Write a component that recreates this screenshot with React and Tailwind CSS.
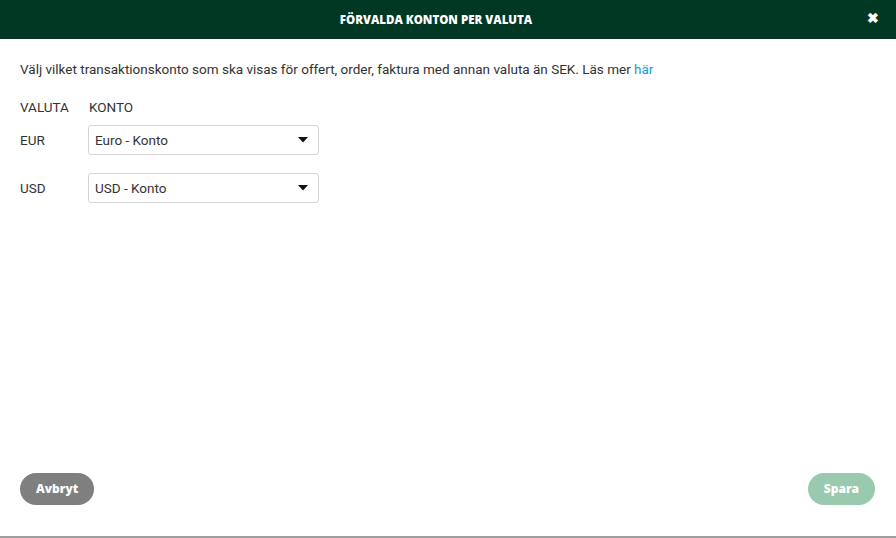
import { useState } from 'react';

const ROWS = [
  { currency: 'EUR', account: 'Euro - Konto' },
  { currency: 'USD', account: 'USD - Konto' },
];

function Select({ value }) {
  return (
    <div className="w-[231px] h-[30px] border border-[#d4d4d4] rounded-[3px] bg-white flex items-center justify-between pl-[6px] pr-[10px]">
      <span className="text-[13.5px] text-[#333]">{value}</span>
      <svg width="10" height="6" viewBox="0 0 10 6">
        <path d="M0 0 L10 0 L5 5.5 Z" fill="#111" />
      </svg>
    </div>
  );
}

export default function App() {
  const [rows] = useState(ROWS);

  return (
    <div className="w-[896px] h-[538px] bg-white flex flex-col border-b-2 border-[#9e9e9e]" style={{ fontFamily: 'Roboto, "Liberation Sans", sans-serif' }}>
      {/* Header */}
      <div className="h-[39px] bg-[#003823] flex items-center relative shrink-0">
        <h1 className="flex-1 pr-[24px] text-center text-white text-[11.5px] font-extrabold uppercase" style={{ fontFamily: '"Open Sans", sans-serif' }}>
          Förvalda konton per valuta
        </h1>
        <button className="absolute right-[17px] top-[11px] text-white text-[14px] font-bold leading-none">
          ✖
        </button>
      </div>

      {/* Body */}
      <div className="flex-1 px-5 pt-[20px] text-[#333] text-[13.5px]">
        <p className="leading-5">
          Välj vilket transaktionskonto som ska visas för offert, order, faktura med annan valuta än SEK. Läs mer{' '}
          <a className="text-[#1a9ad6]">här</a>
        </p>

        <div className="flex mt-[18px] leading-5">
          <span className="w-[69px]">VALUTA</span>
          <span>KONTO</span>
        </div>

        <div className="flex flex-col gap-[18px] mt-[8px]">
          {rows.map((r) => (
            <div key={r.currency} className="flex items-center">
              <span className="w-[68px]">{r.currency}</span>
              <Select value={r.account} />
            </div>
          ))}
        </div>
      </div>

      {/* Footer */}
      <div className="flex justify-between px-5 pb-[31px] shrink-0">
        <button className="h-[32px] px-4 rounded-full bg-[#7f7f7f] text-white text-[12px] font-extrabold" style={{ fontFamily: '"Open Sans", sans-serif' }}>
          Avbryt
        </button>
        <button className="h-[32px] px-4 mr-[1px] rounded-full bg-[#99c9ae] text-white text-[12px] font-extrabold" style={{ fontFamily: '"Open Sans", sans-serif' }}>
          Spara
        </button>
      </div>
    </div>
  );
}
